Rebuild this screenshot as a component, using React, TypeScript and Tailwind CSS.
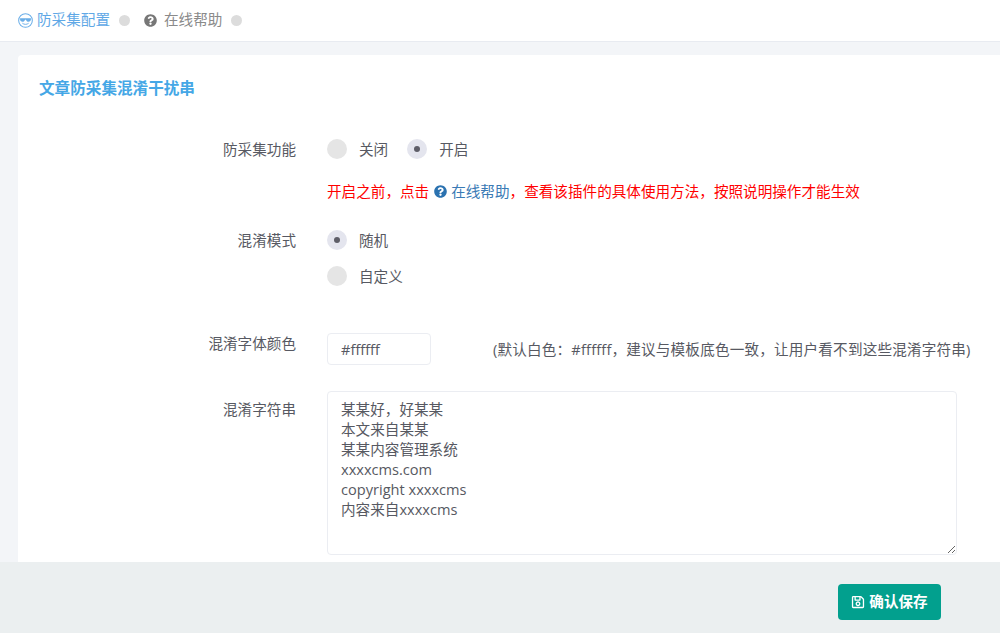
import { FaQuestionCircle, FaRegSave } from 'react-icons/fa';

const font = { fontFamily: '"Open Sans", "Noto Sans CJK SC", sans-serif' };

function CoolFace() {
  return (
    <svg viewBox="0 0 16 16" className="w-[15px] h-[15px] text-[#6aaee8]" fill="none" stroke="currentColor">
      <circle cx="8" cy="8" r="7.3" strokeWidth="1.1" />
      <path d="M2.2 5.6h11.6v1.4c0 1.3-1 2.3-2.6 2.3-1.4 0-2.4-.9-2.7-2.2h-1c-.3 1.3-1.3 2.2-2.7 2.2-1.6 0-2.6-1-2.6-2.3z" fill="currentColor" stroke="none" />
      <path d="M5 11.2c1.6 1.3 4.4 1.3 6 0" strokeWidth="1" strokeLinecap="round" />
    </svg>
  );
}

function Radio({ checked, label }: { checked?: boolean; label: string }) {
  return (
    <div className="flex items-center">
      <span className={`w-5 h-5 rounded-full flex items-center justify-center ${checked ? 'bg-[#e4e5ee]' : 'bg-[#e5e5e5]'}`}>
        {checked && <span className="w-[6px] h-[6px] rounded-full bg-[#5e5e68]" />}
      </span>
      <span className="ml-[12px]">{label}</span>
    </div>
  );
}

function Dot() {
  return <span className="w-[11px] h-[11px] rounded-full bg-[#dcdcdc]" />;
}

export default function App() {
  return (
    <div className="h-[633px] flex flex-col overflow-hidden bg-[#f3f5f8] text-[14.6px] text-[#575962]" style={font}>
      <header className="h-[42px] shrink-0 flex items-center bg-white border-b border-[#e8ebf1] pl-[18px] pb-[1px]">
        <CoolFace />
        <span className="ml-[4px] text-[#5fa8e6]">防采集配置</span>
        <span className="ml-[9px] flex"><Dot /></span>
        <FaQuestionCircle className="ml-[14px] w-[13px] h-[13px] text-[#777]" />
        <span className="ml-[7px] text-[#8a8a8a]">在线帮助</span>
        <span className="ml-[9px] flex"><Dot /></span>
      </header>

      <main className="flex-1 min-h-0 overflow-hidden pl-[18px] pt-[13px]">
        <div className="bg-white rounded-tl-[4px] h-[600px]">
          <h2 className="pl-[21px] pt-[23px] h-[80px] font-bold text-[15.6px] text-[#45a7e6] leading-5">文章防采集混淆干扰串</h2>

          <div className="flex h-[41px]">
            <label className="w-[278px] text-right leading-[29px]">防采集功能</label>
            <div className="ml-[31px] flex h-[29px] items-center gap-[19px]">
              <Radio label="关闭" />
              <Radio checked label="开启" />
            </div>
          </div>

          <div className="ml-[309px] h-[50px] pt-[3px] flex items-start text-[#ff0000] leading-[24px]">
            开启之前，点击
            <span className="ml-[5px] inline-flex items-center text-[#3a7ab5]">
              <FaQuestionCircle className="w-[13px] h-[13px] text-[#2b72b0] mr-[4px]" />在线帮助
            </span>
            ，查看该插件的具体使用方法，按照说明操作才能生效
          </div>

          <div className="flex h-[36px]">
            <label className="w-[278px] text-right leading-[29px]">混淆模式</label>
            <div className="ml-[31px] flex h-[29px] items-center">
              <Radio checked label="随机" />
            </div>
          </div>
          <div className="flex h-[71px]">
            <div className="ml-[309px] flex h-[29px] items-center">
              <Radio label="自定义" />
            </div>
          </div>

          <div className="flex h-[58px]">
            <label className="w-[278px] text-right leading-[20px]">混淆字体颜色</label>
            <input
              readOnly
              value="#ffffff"
              className="ml-[31px] w-[104px] h-[32px] px-[13px] border border-[#ebedf2] rounded-[4px] outline-none bg-white"
            />
            <span className="ml-[62px] leading-[32px] tracking-[0.18px] whitespace-nowrap">(默认白色：#ffffff，建议与模板底色一致，让用户看不到这些混淆字符串)</span>
          </div>

          <div className="flex">
            <label className="w-[278px] text-right leading-[36px]">混淆字符串</label>
            <textarea
              readOnly
              defaultValue={'某某好，好某某\n本文来自某某\n某某内容管理系统\nxxxxcms.com\ncopyright xxxxcms\n内容来自xxxxcms'}
              className="ml-[31px] w-[630px] h-[164px] px-[13px] py-[7px] leading-[20px] border border-[#ebedf2] rounded-[4px] outline-none bg-white block"
            />
          </div>
        </div>
      </main>

      <footer className="h-[71px] shrink-0 bg-[#ebeff0] flex justify-end items-start pt-[22px] pr-[59px]">
        <button className="w-[103px] h-[36px] rounded-[4px] bg-[#02a08e] text-white font-bold flex items-center justify-center gap-[4px]">
          <FaRegSave className="w-[14px] h-[14px]" />确认保存
        </button>
      </footer>
    </div>
  );
}
